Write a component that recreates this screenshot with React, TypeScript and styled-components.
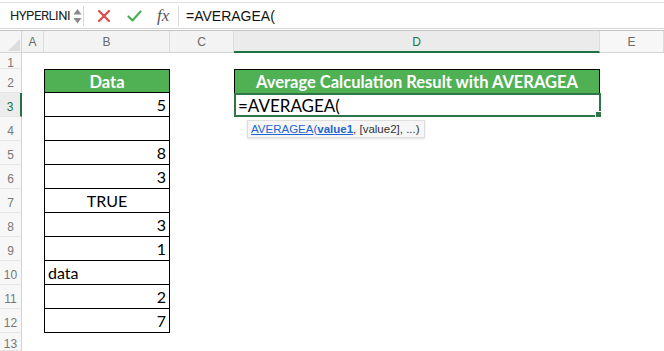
import React from "react";
import styled, { createGlobalStyle, css } from "styled-components";

const GlobalStyle = createGlobalStyle`
  html, body {
    margin: 0;
    padding: 0;
    background: #ffffff;
  }
  body {
    width: 664px;
    height: 351px;
    overflow: hidden;
    font-family: "Liberation Sans", Arial, sans-serif;
  }
`;

const columns = ["A", "B", "C", "D", "E"];
const activeColumn = "D";
const activeRow = 3;

type BCell = { value: string; align?: "left" | "center" | "right"; head?: boolean };

// column B contents, rows 2..12
const dataColumn: BCell[] = [
  { value: "Data", head: true },
  { value: "5" },
  { value: "" },
  { value: "8" },
  { value: "3" },
  { value: "TRUE", align: "center" },
  { value: "3" },
  { value: "1" },
  { value: "data", align: "left" },
  { value: "2" },
  { value: "7" },
];

export default function App() {
  const rows = Array.from({ length: 13 }, (_, i) => i + 1);

  return (
    <>
      <GlobalStyle />
      <Page>
        <Toolbar>
          <NameBox>
            <NameText>HYPERLINI</NameText>
            <Spinner>
              <svg width="9" height="20" viewBox="0 0 9 20">
                <path d="M4.5 3 L8.5 8.5 L0.5 8.5 Z" fill="#8a8a8a" />
                <path d="M4.5 17.5 L8.5 12 L0.5 12 Z" fill="#8a8a8a" />
              </svg>
            </Spinner>
          </NameBox>
          <Divider />
          <IconSlot $gap={14} $w={12}>
            <svg width="12" height="12" viewBox="0 0 12 12">
              <path d="M1 1 L11 11 M11 1 L1 11" stroke="#dd4b47" strokeWidth="2.2" strokeLinecap="round" />
            </svg>
          </IconSlot>
          <IconSlot $gap={17} $w={15}>
            <svg width="15" height="12" viewBox="0 0 15 12">
              <path d="M1.5 6.5 L5.5 10.5 L13.5 1.5" stroke="#4cae58" strokeWidth="2.2" fill="none" strokeLinecap="round" strokeLinejoin="round" />
            </svg>
          </IconSlot>
          <Fx>fx</Fx>
          <Divider />
          <FormulaText>=AVERAGEA(</FormulaText>
        </Toolbar>

        <Sheet>
          <Corner>
            <svg width="16" height="16" viewBox="0 0 16 16">
              <path d="M15 3 L15 15 L3 15 Z" fill="#dcdcdc" />
            </svg>
          </Corner>
          {columns.map((c) => (
            <ColHead key={c} $active={c === activeColumn} $plain={c === "E"}>
              {c}
            </ColHead>
          ))}

          {rows.map((r) => {
            const b = r >= 2 && r <= 12 ? dataColumn[r - 2] : null;
            return (
              <React.Fragment key={r}>
                <RowHead $active={r === activeRow}>{r}</RowHead>
                <Cell />
                {b ? (
                  b.head ? (
                    <HeadCell>{b.value}</HeadCell>
                  ) : (
                    <DataCell $align={b.align || "right"}>{b.value}</DataCell>
                  )
                ) : (
                  <Cell />
                )}
                <Cell />
                {r === 2 ? (
                  <ResultHead>Average Calculation Result with AVERAGEA</ResultHead>
                ) : r === 3 ? (
                  <ActiveCell>
                    =AVERAGEA(
                    <FillHandle />
                  </ActiveCell>
                ) : (
                  <Cell />
                )}
                <Cell />
              </React.Fragment>
            );
          })}

          <Tip>
            <TipLink>AVERAGEA</TipLink>
            <TipPlain $blue>(</TipPlain>
            <TipLink $bold>value1</TipLink>
            <TipPlain>, [value2], ...)</TipPlain>
          </Tip>
        </Sheet>
      </Page>
    </>
  );
}

const Page = styled.div`
  width: 664px;
  height: 351px;
  overflow: hidden;
  padding-top: 2px;
  box-sizing: border-box;
`;

const Toolbar = styled.div`
  display: flex;
  align-items: center;
  height: 27px;
  box-sizing: border-box;
  border-top: 1px solid #e0e0e0;
  border-bottom: 1px solid #d6d6d6;
  margin-bottom: 1px;
  background: #ffffff;
`;

const NameBox = styled.div`
  display: flex;
  align-items: center;
  flex-shrink: 0;
  width: 83px;
  padding-left: 10px;
  box-sizing: border-box;
  overflow: hidden;
`;

const NameText = styled.span`
  font-family: Roboto, "Liberation Sans", sans-serif;
  font-size: 13px;
  letter-spacing: -0.4px;
  color: #222;
`;

const Spinner = styled.span`
  display: flex;
  margin-left: 3px;
`;

const Divider = styled.div`
  flex-shrink: 0;
  width: 1px;
  height: 20px;
  background: #dadada;
`;

const IconSlot = styled.div<{ $gap: number; $w: number }>`
  display: flex;
  align-items: center;
  justify-content: center;
  flex-shrink: 0;
  width: ${(p) => p.$w}px;
  margin-left: ${(p) => p.$gap}px;
`;

const Fx = styled.span`
  font-family: "Liberation Serif", "Times New Roman", serif;
  font-style: italic;
  font-size: 17px;
  color: #555;
  margin-left: 15px;
  width: 15px;
  margin-right: 6px;
`;

const FormulaText = styled.span`
  font-size: 14px;
  color: #111;
  margin-left: 7px;
`;

const Sheet = styled.div`
  position: relative;
  display: grid;
  grid-template-columns: 22px 22px 126px 64px 366px 64px;
  grid-template-rows: 22px 16px repeat(11, 24px) 18px;
  border-top: 1px solid #c4c4c4;
  font-family: "Lato", "Noto Sans", sans-serif;
`;

const headBase = css`
  display: flex;
  align-items: center;
  justify-content: center;
  box-sizing: border-box;
  font-family: "Liberation Sans", Arial, sans-serif;
  font-size: 12px;
  color: #6a6a6a;
`;

const Corner = styled.div`
  ${headBase};
  justify-content: flex-end;
  align-items: flex-end;
  background: #f5f5f5;
  border-right: 1px solid #d4d4d4;
  border-bottom: 1px solid #d4d4d4;
`;

const ColHead = styled.div<{ $active?: boolean; $plain?: boolean }>`
  ${headBase};
  background: ${(p) => (p.$active ? "#ebebeb" : p.$plain ? "#f7f7f7" : "#f3f3f3")};
  border-right: 1px solid #dcdcdc;
  border-bottom: ${(p) => (p.$active ? "2px solid #217346" : "1px solid #d4d4d4")};
  color: ${(p) => (p.$active ? "#217346" : "#6a6a6a")};
  padding-top: 1px;
`;

const RowHead = styled.div<{ $active?: boolean }>`
  ${headBase};
  background: ${(p) => (p.$active ? "#ececec" : "#f7f7f7")};
  border-right: ${(p) => (p.$active ? "2px solid #217346" : "1px solid #d4d4d4")};
  border-bottom: 1px solid #e6e6e6;
  color: ${(p) => (p.$active ? "#217346" : "#777")};
  padding-top: 4px;
`;

const Cell = styled.div`
  background: #ffffff;
`;

const DataCell = styled.div<{ $align: "left" | "center" | "right" }>`
  display: flex;
  align-items: flex-end;
  justify-content: ${(p) => (p.$align === "left" ? "flex-start" : p.$align === "center" ? "center" : "flex-end")};
  box-sizing: border-box;
  padding: 0 3px 1px 3px;
  border-left: 1px solid #000;
  border-right: 1px solid #000;
  border-bottom: 1px solid #000;
  font-size: 16px;
  line-height: 20px;
  color: #000;
`;

const HeadCell = styled.div`
  display: flex;
  align-items: center;
  justify-content: center;
  box-sizing: border-box;
  background: #50b054;
  border: 1px solid #000;
  font-size: 16.5px;
  font-weight: 700;
  color: #ffffff;
  padding-top: 1px;
`;

const ResultHead = styled(HeadCell)`
  border-bottom: none;
`;

const ActiveCell = styled.div`
  position: relative;
  display: flex;
  align-items: center;
  box-sizing: border-box;
  border: 2px solid #2e7548;
  margin-right: -1px;
  padding: 1px 0 0 2px;
  font-size: 17px;
  color: #000;
`;

const FillHandle = styled.span`
  position: absolute;
  right: -3px;
  bottom: -3px;
  width: 5px;
  height: 5px;
  background: #2e7548;
  border: 1px solid #fff;
`;

const Tip = styled.div`
  position: absolute;
  left: 247px;
  top: 89px;
  height: 18px;
  padding: 0 4px 0 3px;
  display: flex;
  align-items: center;
  box-sizing: border-box;
  background: #f6f6f6;
  border: 1px solid #dedede;
  box-shadow: 0 1px 2px rgba(0, 0, 0, 0.12);
  font-family: "Liberation Sans", Arial, sans-serif;
  font-size: 11.5px;
  color: #333;
  white-space: pre;
`;

const TipLink = styled.span<{ $bold?: boolean }>`
  color: #1f66d1;
  text-decoration: underline;
  font-weight: ${(p) => (p.$bold ? 700 : 400)};
`;

const TipPlain = styled.span<{ $blue?: boolean }>`
  color: ${(p) => (p.$blue ? "#1f66d1" : "#333")};
`;
